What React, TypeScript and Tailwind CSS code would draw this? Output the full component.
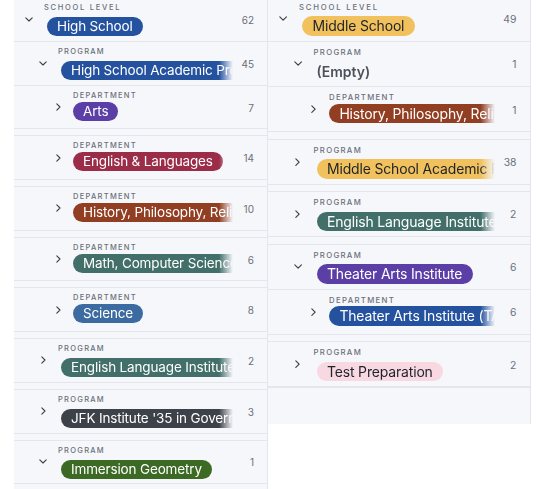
type Level = 0 | 1 | 2

interface Item {
    level: Level
    open?: boolean
    name: string
    count: number
    pill?: string
}

const LABELS = ['School Level', 'Program', 'Department']

const BLUE = 'bg-[#24529f] text-white'
const PURPLE = 'bg-[#5b3fa6] text-white'
const CRIMSON = 'bg-[#9c2d48] text-white'
const RUST = 'bg-[#923e22] text-white'
const TEAL = 'bg-[#426f6a] text-white'
const STEEL = 'bg-[#3b6ba0] text-white'
const SLATE = 'bg-[#3d4149] text-white'
const GREEN = 'bg-[#3c6a25] text-white'
const YELLOW = 'bg-[#f0c15c] text-[#1f2329]'
const PINK = 'bg-[#f8d8e1] text-[#1f2329]'

const left: Item[] = [
    { level: 0, open: true, name: 'High School', count: 62, pill: BLUE },
    { level: 1, open: true, name: 'High School Academic Program', count: 45, pill: BLUE },
    { level: 2, name: 'Arts', count: 7, pill: PURPLE },
    { level: 2, name: 'English & Languages', count: 14, pill: CRIMSON },
    { level: 2, name: 'History, Philosophy, Religion', count: 10, pill: RUST },
    { level: 2, name: 'Math, Computer Science & Technology', count: 6, pill: TEAL },
    { level: 2, name: 'Science', count: 8, pill: STEEL },
    { level: 1, name: 'English Language Institute (ELI)', count: 2, pill: TEAL },
    { level: 1, name: "JFK Institute '35 in Government", count: 3, pill: SLATE },
    { level: 1, open: true, name: 'Immersion Geometry', count: 1, pill: GREEN },
]

const right: Item[] = [
    { level: 0, open: true, name: 'Middle School', count: 49, pill: YELLOW },
    { level: 1, open: true, name: '(Empty)', count: 1 },
    { level: 2, name: 'History, Philosophy, Religion', count: 1, pill: RUST },
    { level: 1, name: 'Middle School Academic Program', count: 38, pill: YELLOW },
    { level: 1, name: 'English Language Institute (ELI)', count: 2, pill: TEAL },
    { level: 1, open: true, name: 'Theater Arts Institute', count: 6, pill: PURPLE },
    { level: 2, name: 'Theater Arts Institute (TAI)', count: 6, pill: BLUE },
    { level: 1, name: 'Test Preparation', count: 2, pill: PINK },
]

const indent = ['pl-[8px]', 'pl-[22px]', 'pl-[37px]']
const tracking = ['tracking-[0.23em]', 'tracking-[0.17em]', 'tracking-[0.17em]']

const Chevron = ({ open }: { open?: boolean }) =>
    open
        ? (
            <svg width="8" height="5" viewBox="0 0 8 5" fill="none" stroke="#3a3f47" strokeWidth="1.1" strokeLinecap="round" strokeLinejoin="round">
                <path d="M0.8 0.8L4 4L7.2 0.8" />
            </svg>
            )
        : (
            <svg width="5" height="8" viewBox="0 0 5 8" fill="none" stroke="#3a3f47" strokeWidth="1.1" strokeLinecap="round" strokeLinejoin="round">
                <path d="M0.8 0.8L4 4L0.8 7.2" />
            </svg>
            )

const Row = ({ item }: { item: Item }) => {
    const dept = item.level === 2
    return (
        <div className={`flex h-[43.7px] items-center border-b border-[#e4e6eb] ${indent[item.level]}`}>
            <div className="flex w-[14px] justify-center">
                <Chevron open={item.open} />
            </div>
            <div className="ml-[8px] flex min-w-0 flex-1 flex-col self-start pt-[5px]">
                <div className={`text-[7.5px] leading-[10px] font-medium whitespace-nowrap text-[#6b7079] uppercase ${tracking[item.level]}`}>
                    {LABELS[item.level]}
                </div>
                <div className={`flex min-w-0 overflow-hidden ${dept ? 'mt-[1px]' : 'mt-[4px] pl-[3px]'} [mask-image:linear-gradient(to_right,#000_calc(100%_-_14px),transparent)]`}>
                    {item.pill
                        ? (
                            <span className={`inline-flex h-[19px] shrink-0 items-center rounded-full px-[10px] text-[13.5px] leading-[19px] tracking-[-0.15px] whitespace-nowrap ${item.pill}`}>
                                {item.name}
                            </span>
                            )
                        : (
                            <span className="h-[19px] text-[13.5px] leading-[19px] font-semibold whitespace-nowrap text-[#4b5059]">
                                {item.name}
                            </span>
                            )}
                </div>
            </div>
            <div className="box-content w-[21px] pt-[2px] pr-[13px] text-right text-[10px] text-[#6b7079]">
                {item.count}
            </div>
        </div>
    )
}

const Rows = ({ items }: { items: Item[] }) => (
    <>
        {items.map((item, i) => {
            const gap = i > 0 && item.level <= items[i - 1].level
            return (
                <div key={i}>
                    {gap && <div className="h-[7px] border-b border-[#e4e6eb]" />}
                    <Row item={item} />
                </div>
            )
        })}
    </>
)

export default function App() {
    return (
        <div className="flex h-[489px] items-start overflow-hidden bg-white pl-[14px] font-[Inter,sans-serif]">
            <div className="-mt-[1.7px] flex w-[254px] flex-col border-r border-[#e4e6eb] bg-[#f6f7fb]">
                <Rows items={left} />
                <div className="h-[12px]" />
            </div>
            <div className="-mt-[3.2px] flex w-[254px] flex-col border-r border-[#e4e6eb] bg-[#f6f7fb] [zoom:1.035]">
                <Rows items={right} />
                <div className="h-[35.7px] border-t border-[#e4e6eb]" />
            </div>
        </div>
    )
}
